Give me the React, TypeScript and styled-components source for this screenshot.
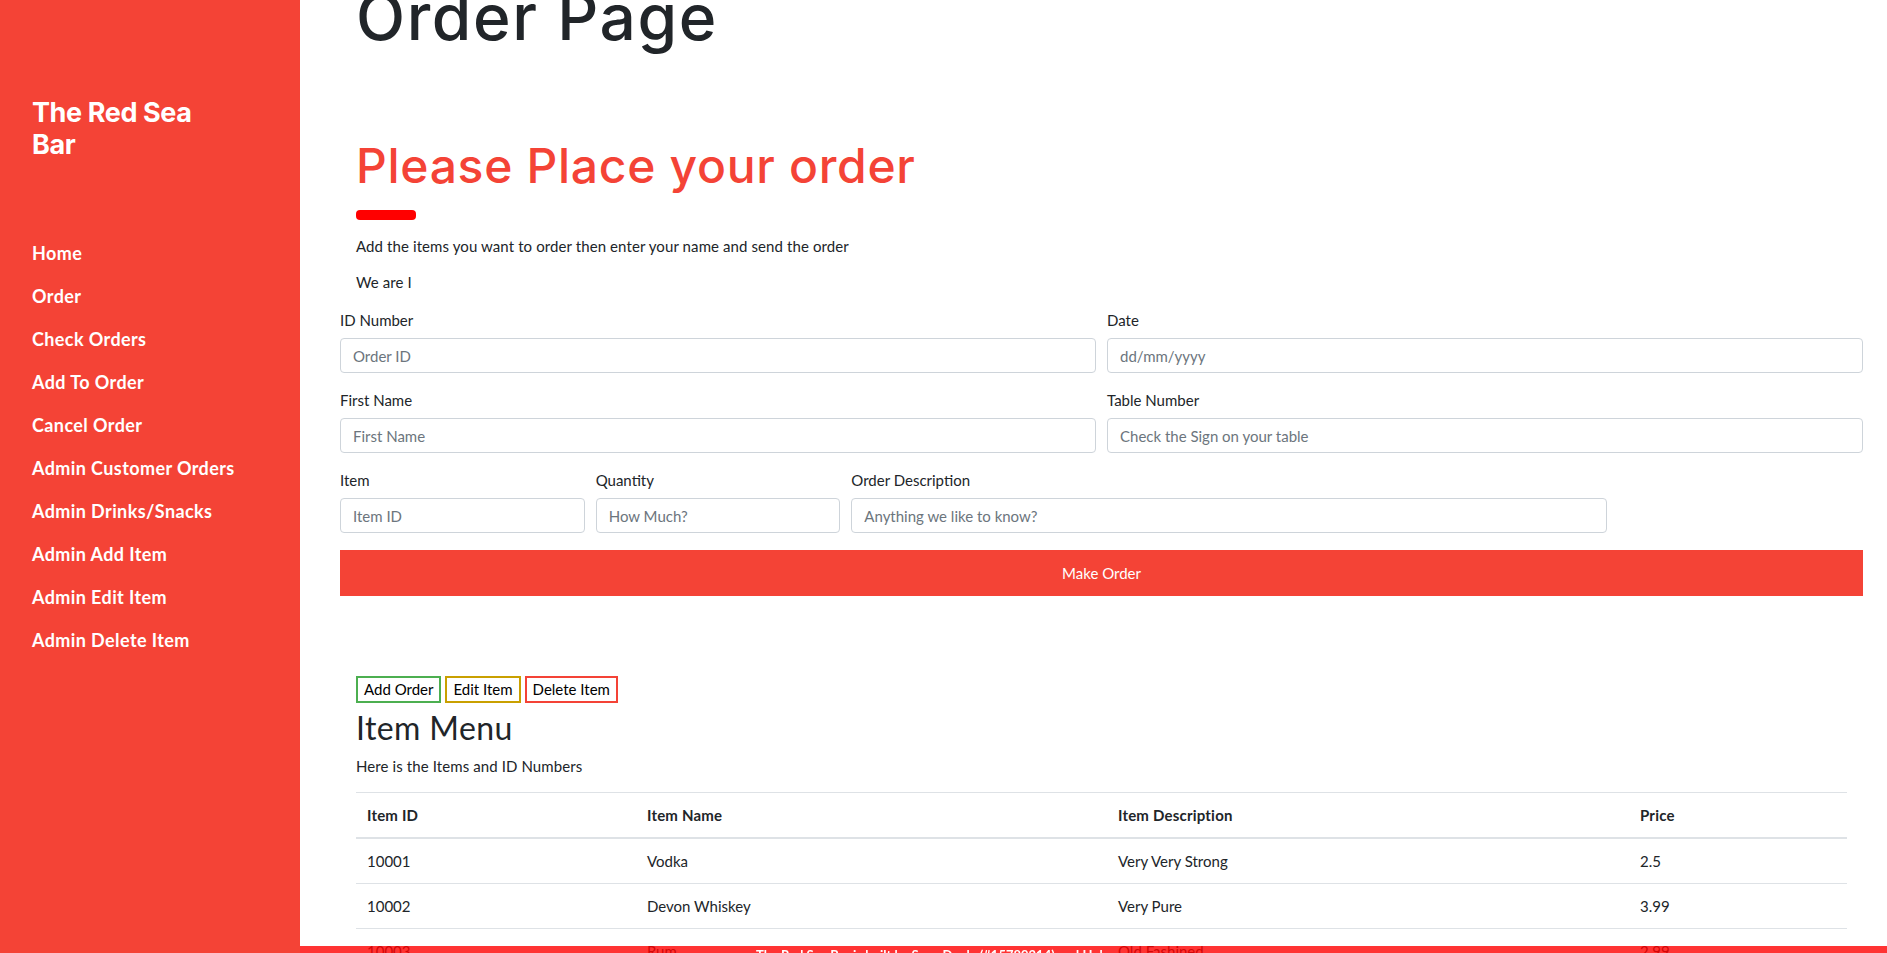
import React from "react";
import styled, { createGlobalStyle } from "styled-components";

const GlobalStyle = createGlobalStyle`
  html, body {
    margin: 0;
    padding: 0;
    overflow: hidden;
    background: #ffffff;
  }
  body {
    font-family: Lato, "Open Sans", sans-serif;
    font-size: 16px;
    color: #212529;
  }
  *, *::before, *::after { box-sizing: border-box; }
`;

const Page = styled.div`
  display: flex;
  height: 100vh;
  overflow: hidden;
`;

const Sidebar = styled.nav`
  position: relative;
  z-index: 2;
  flex: 0 0 300px;
  width: 300px;
  background: #f44336;
  color: #ffffff;
  padding: 8px 16px;
`;

const Brand = styled.h3`
  margin: 89px 0 0;
  padding: 0 16px;
  font-family: Inter, sans-serif;
  font-weight: 700;
  font-size: 27px;
  line-height: 32px;
  letter-spacing: -0.4px;
`;

const NavList = styled.div`
  display: flex;
  flex-direction: column;
  margin-top: 71px;
`;

const NavLink = styled.a`
  display: block;
  padding: 8px 16px;
  font-size: 18px;
  line-height: 27px;
  font-weight: 700;
  letter-spacing: 0.4px;
  color: #ffffff;
  text-decoration: none;
`;

const Main = styled.main`
  flex: 1;
  min-width: 0;
  padding: 0 24px 0 40px;
`;

const Container = styled.section`
  padding: 0 16px;
`;

const PageTitle = styled.h1`
  margin: -15px 0 0;
  font-family: Inter, sans-serif;
  font-weight: 500;
  font-size: 64px;
  line-height: 64px;
  letter-spacing: 1.6px;
  color: #212529;
`;

const Headline = styled.h2`
  margin: 89px 0 0;
  font-family: Inter, sans-serif;
  font-weight: 500;
  font-size: 48px;
  line-height: 56px;
  letter-spacing: 0.7px;
  color: #f44336;
`;

const Accent = styled.div`
  margin-top: 16px;
  width: 60px;
  height: 10px;
  border-radius: 4px;
  background: #ff0000;
`;

const Lead = styled.p<{ $gap: number }>`
  margin: ${(p) => p.$gap}px 0 0;
  font-size: 15px;
  line-height: 24px;
  letter-spacing: 0.1px;
`;

const OrderForm = styled.form`
  display: grid;
  grid-template-columns: repeat(12, 1fr);
  column-gap: 11px;
  row-gap: 15px;
  margin-top: 14px;
`;

const Field = styled.div<{ $span: number }>`
  grid-column: span ${(p) => p.$span};
  display: flex;
  flex-direction: column;
`;

const Label = styled.label`
  font-size: 15px;
  line-height: 24px;
  margin-bottom: 6px;
`;

const Input = styled.input`
  height: 35px;
  width: 100%;
  padding: 0 12px;
  font-family: Lato, "Open Sans", sans-serif;
  font-size: 15px;
  color: #212529;
  border: 1px solid #ced4da;
  border-radius: 4px;
  background: #ffffff;
  &::placeholder { color: #6c757d; }
`;

const SubmitButton = styled.button`
  grid-column: 1 / -1;
  margin-top: 2px;
  height: 46px;
  border: none;
  border-radius: 0;
  background: #f44336;
  color: #ffffff;
  font-family: Lato, "Open Sans", sans-serif;
  font-size: 15px;
`;

const MenuSection = styled(Container)`
  margin-top: 80px;
`;

const ActionRow = styled.div`
  display: flex;
  gap: 4px;
`;

const OutlineButton = styled.button<{ $tone: string }>`
  height: 27px;
  padding: 0 6px;
  border: 2px solid ${(p) => p.$tone};
  background: #ffffff;
  color: #000000;
  font-family: Lato, "Open Sans", sans-serif;
  font-size: 15px;
  line-height: 23px;
`;

const SectionTitle = styled.h2`
  margin: 6px 0 0;
  font-family: Lato, sans-serif;
  font-weight: 400;
  font-size: 32px;
  line-height: 38px;
  letter-spacing: 0.4px;
`;

const Table = styled.table`
  margin-top: 14px;
  width: 100%;
  border-collapse: collapse;
  border-top: 1px solid #dee2e6;
  font-size: 15px;
`;

const HeadCell = styled.th<{ $w: number }>`
  width: ${(p) => p.$w}px;
  text-align: left;
  font-weight: 700;
  padding: 10px 11px;
  line-height: 24px;
  letter-spacing: 0.2px;
  border-bottom: 2px solid #dee2e6;
`;

const Cell = styled.td`
  padding: 10px 11px;
  line-height: 24px;
  border-bottom: 1px solid #dee2e6;
`;

const Footer = styled.footer`
  position: fixed;
  left: 0;
  right: 0;
  bottom: 0;
  z-index: 1;
  height: 7px;
  overflow: hidden;
  background: rgba(255, 0, 0, 0.8);
  color: #ffffff;
  text-align: center;
  padding: 2px 24px 0 0;
  font-weight: 700;
  font-size: 13px;
  line-height: 14px;
`;

const navItems = [
  "Home",
  "Order",
  "Check Orders",
  "Add To Order",
  "Cancel Order",
  "Admin Customer Orders",
  "Admin Drinks/Snacks",
  "Admin Add Item",
  "Admin Edit Item",
  "Admin Delete Item",
];

const items = [
  { id: "10001", name: "Vodka", desc: "Very Very Strong", price: "2.5" },
  { id: "10002", name: "Devon Whiskey", desc: "Very Pure", price: "3.99" },
  { id: "10003", name: "Rum", desc: "Old Fashined", price: "2.99" },
  { id: "10004", name: "Gin", desc: "Very Dry", price: "3.5" },
];

export default function App() {
  return (
    <>
      <GlobalStyle />
      <Page>
        <Sidebar>
          <Brand>
            The Red Sea
            <br />
            Bar
          </Brand>
          <NavList>
            {navItems.map((n) => (
              <NavLink key={n} href="#">
                {n}
              </NavLink>
            ))}
          </NavList>
        </Sidebar>
        <Main>
          <Container>
            <PageTitle>Order Page</PageTitle>
            <Headline>Please Place your order</Headline>
            <Accent />
            <Lead $gap={14}>
              Add the items you want to order then enter your name and send the order
            </Lead>
            <Lead $gap={12}>We are I</Lead>
          </Container>
          <OrderForm onSubmit={(e) => e.preventDefault()}>
            <Field $span={6}>
              <Label>ID Number</Label>
              <Input placeholder="Order ID" />
            </Field>
            <Field $span={6}>
              <Label>Date</Label>
              <Input placeholder="dd/mm/yyyy" />
            </Field>
            <Field $span={6}>
              <Label>First Name</Label>
              <Input placeholder="First Name" />
            </Field>
            <Field $span={6}>
              <Label>Table Number</Label>
              <Input placeholder="Check the Sign on your table" />
            </Field>
            <Field $span={2}>
              <Label>Item</Label>
              <Input placeholder="Item ID" />
            </Field>
            <Field $span={2}>
              <Label>Quantity</Label>
              <Input placeholder="How Much?" />
            </Field>
            <Field $span={6}>
              <Label>Order Description</Label>
              <Input placeholder="Anything we like to know?" />
            </Field>
            <SubmitButton type="submit">Make Order</SubmitButton>
          </OrderForm>
          <MenuSection>
            <ActionRow>
              <OutlineButton $tone="#4caf50">Add Order</OutlineButton>
              <OutlineButton $tone="#c9a000">Edit Item</OutlineButton>
              <OutlineButton $tone="#f44336">Delete Item</OutlineButton>
            </ActionRow>
            <SectionTitle>Item Menu</SectionTitle>
            <Lead $gap={7}>Here is the Items and ID Numbers</Lead>
            <Table>
              <thead>
                <tr>
                  <HeadCell $w={280}>Item ID</HeadCell>
                  <HeadCell $w={471}>Item Name</HeadCell>
                  <HeadCell $w={522}>Item Description</HeadCell>
                  <HeadCell $w={218}>Price</HeadCell>
                </tr>
              </thead>
              <tbody>
                {items.map((it) => (
                  <tr key={it.id}>
                    <Cell>{it.id}</Cell>
                    <Cell>{it.name}</Cell>
                    <Cell>{it.desc}</Cell>
                    <Cell>{it.price}</Cell>
                  </tr>
                ))}
              </tbody>
            </Table>
          </MenuSection>
        </Main>
      </Page>
      <Footer>The Red Sea Bar is built by Sean Doyle (#15789214) and Hub</Footer>
    </>
  );
}
